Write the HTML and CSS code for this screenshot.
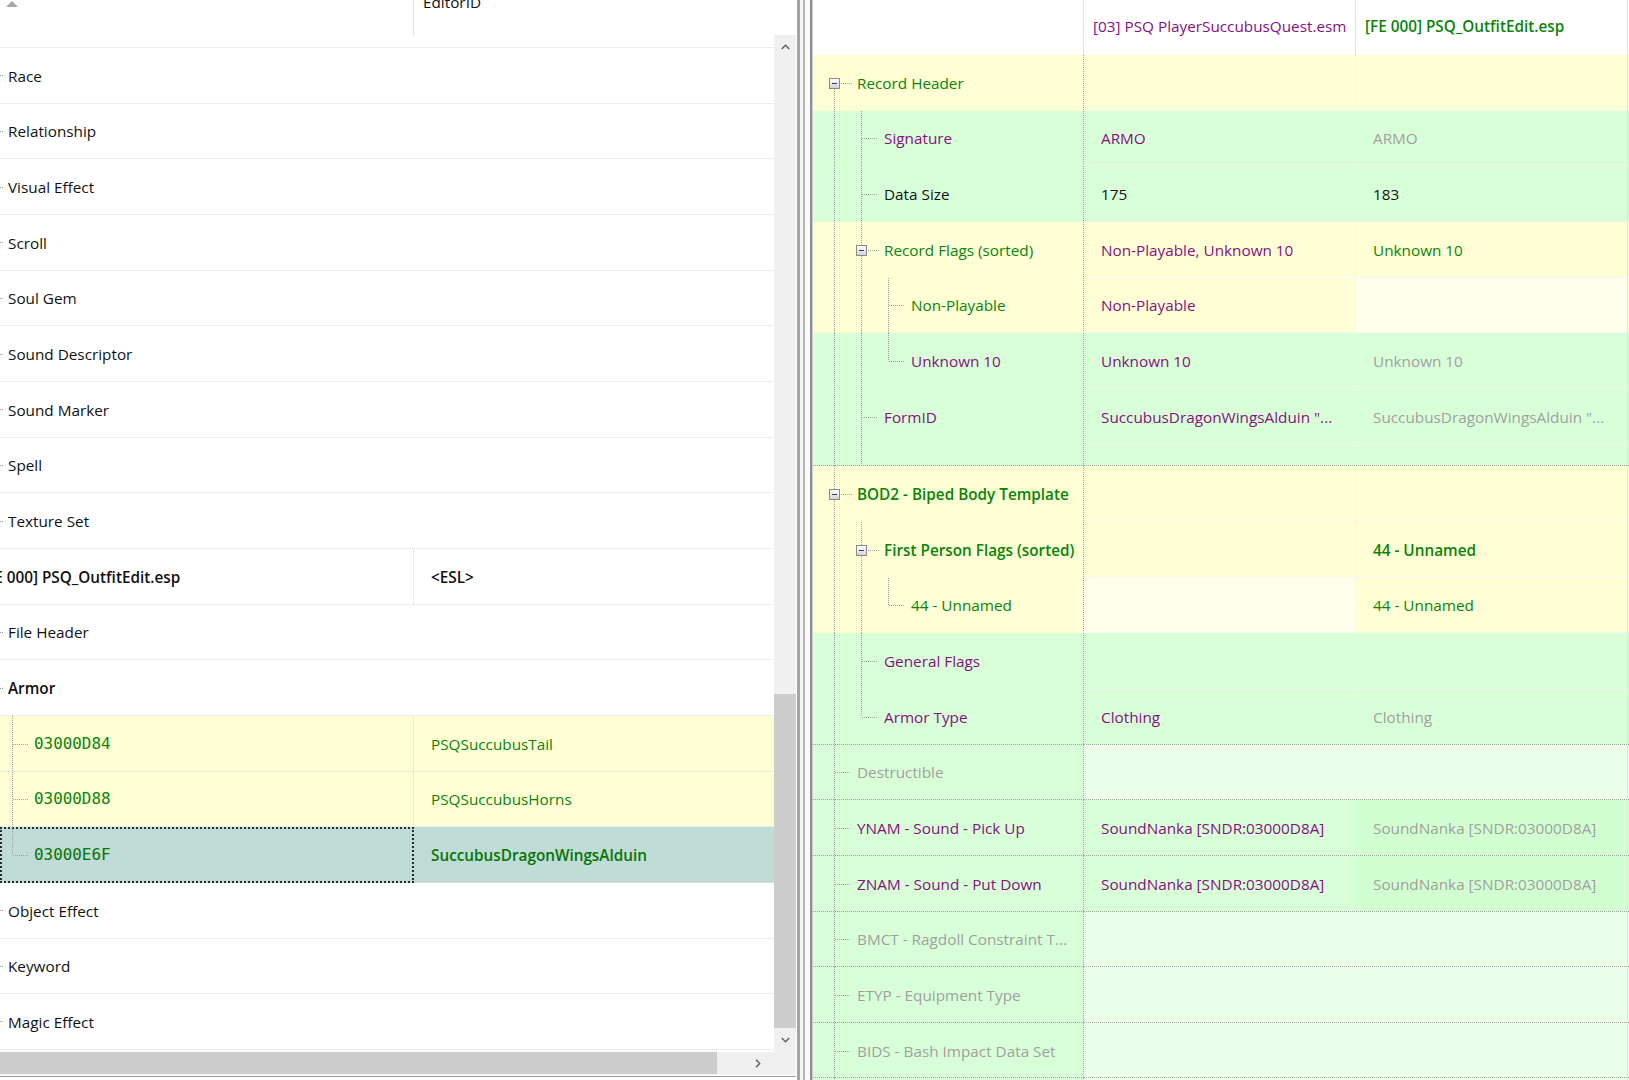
FILE: index.html
```html
<!DOCTYPE html>
<html lang="en">
<head>
<meta charset="utf-8">
<title>PSQ_OutfitEdit.esp - Armor</title>
<link rel="stylesheet" href="styles.css">
</head>
<body>
<div class="app">
  <section class="left">
    <div class="lhead">
      <div class="lh1"><svg class="sort" width="12" height="7" viewBox="0 0 12 7"><polygon points="0,7 6,1 12,7" fill="#a8a8a8"/></svg></div>
      <div class="lh2"><span>EditorID</span></div>
    </div>
    <div class="lmid">
      <div class="lbody">
        <div class="lr part"></div>
        <div class="lr"><div class="l1"><i class="dot"></i><span>Race</span></div><div class="l2"></div></div>
        <div class="lr"><div class="l1"><i class="dot"></i><span>Relationship</span></div><div class="l2"></div></div>
        <div class="lr"><div class="l1"><i class="dot"></i><span>Visual Effect</span></div><div class="l2"></div></div>
        <div class="lr"><div class="l1"><i class="dot"></i><span>Scroll</span></div><div class="l2"></div></div>
        <div class="lr"><div class="l1"><i class="dot"></i><span>Soul Gem</span></div><div class="l2"></div></div>
        <div class="lr"><div class="l1"><i class="dot"></i><span>Sound Descriptor</span></div><div class="l2"></div></div>
        <div class="lr"><div class="l1"><i class="dot"></i><span>Sound Marker</span></div><div class="l2"></div></div>
        <div class="lr"><div class="l1"><i class="dot"></i><span>Spell</span></div><div class="l2"></div></div>
        <div class="lr"><div class="l1"><i class="dot"></i><span>Texture Set</span></div><div class="l2"></div></div>
        <div class="lr split"><div class="l1"><span class="b neg">[FE 000] PSQ_OutfitEdit.esp</span></div><div class="l2"><span class="b">&lt;ESL&gt;</span></div></div>
        <div class="lr"><div class="l1"><i class="dot"></i><span>File Header</span></div><div class="l2"></div></div>
        <div class="lr"><div class="l1"><i class="dot"></i><span class="b">Armor</span></div><div class="l2"></div></div>
        <div class="lr split y"><div class="l1"><i class="kid"></i><span class="mono g">03000D84</span></div><div class="l2"><span class="g">PSQSuccubusTail</span></div></div>
        <div class="lr split y"><div class="l1"><i class="kid"></i><span class="mono g">03000D88</span></div><div class="l2"><span class="g">PSQSuccubusHorns</span></div></div>
        <div class="lr split sel"><div class="l1"><i class="kid last"></i><span class="mono dg">03000E6F</span></div><div class="l2"><span class="dg b">SuccubusDragonWingsAlduin</span></div></div>
        <div class="lr"><div class="l1"><i class="dot"></i><span>Object Effect</span></div><div class="l2"></div></div>
        <div class="lr"><div class="l1"><i class="dot"></i><span>Keyword</span></div><div class="l2"></div></div>
        <div class="lr"><div class="l1"><i class="dot"></i><span>Magic Effect</span></div><div class="l2"></div></div>
      </div>
      <div class="vscroll">
        <div class="sbtn"><svg width="9" height="6" viewBox="0 0 9 6"><polyline points="0.8,5 4.5,1.3 8.2,5" fill="none" stroke="#606060" stroke-width="1.4"/></svg></div>
        <div class="strack"></div>
        <div class="vthumb"></div>
        <div class="sbtn"><svg width="9" height="6" viewBox="0 0 9 6"><polyline points="0.8,1 4.5,4.7 8.2,1" fill="none" stroke="#606060" stroke-width="1.4"/></svg></div>
      </div>
    </div>
    <div class="hscroll">
      <div class="hthumb"></div>
      <div class="htrack"><svg width="6" height="9" viewBox="0 0 6 9"><polyline points="1,0.8 4.7,4.5 1,8.2" fill="none" stroke="#606060" stroke-width="1.4"/></svg></div>
      <div class="corner"></div>
    </div>
    <div class="lfoot"></div>
  </section>

  <div class="splitter"></div>

  <section class="right">
    <div class="rhead">
      <div class="rh"></div>
      <div class="rh"><span class="p">[03] PSQ PlayerSuccubusQuest.esm</span></div>
      <div class="rh"><span class="g b">[FE 000] PSQ_OutfitEdit.esp</span></div>
      <div class="rh tl"></div>
    </div>

    <div class="rr y">
      <div class="rc c1"><i class="gd boxf"><b class="bx"></b></i><span class="t g">Record Header</span></div>
      <div class="rc c2"></div><div class="rc c3"></div><div class="rc tl"></div>
    </div>
    <div class="rr gn">
      <div class="rc c1"><i class="gd"></i><i class="gd tee"></i><span class="t p">Signature</span></div>
      <div class="rc c2"><span class="p">ARMO</span></div><div class="rc c3"><span class="gr">ARMO</span></div><div class="rc tl"></div>
    </div>
    <div class="rr gn">
      <div class="rc c1"><i class="gd"></i><i class="gd tee"></i><span class="t">Data Size</span></div>
      <div class="rc c2"><span>175</span></div><div class="rc c3"><span>183</span></div><div class="rc tl"></div>
    </div>
    <div class="rr y">
      <div class="rc c1"><i class="gd"></i><i class="gd boxm"><b class="bx"></b></i><span class="t g">Record Flags (sorted)</span></div>
      <div class="rc c2"><span class="p">Non-Playable, Unknown 10</span></div><div class="rc c3"><span class="g">Unknown 10</span></div><div class="rc tl"></div>
    </div>
    <div class="rr y">
      <div class="rc c1"><i class="gd"></i><i class="gd"></i><i class="gd tee"></i><span class="t g">Non-Playable</span></div>
      <div class="rc c2"><span class="p">Non-Playable</span></div><div class="rc c3 ly"></div><div class="rc tl"></div>
    </div>
    <div class="rr gn">
      <div class="rc c1"><i class="gd"></i><i class="gd"></i><i class="gd elb"></i><span class="t p">Unknown 10</span></div>
      <div class="rc c2"><span class="p">Unknown 10</span></div><div class="rc c3"><span class="gr">Unknown 10</span></div><div class="rc tl"></div>
    </div>
    <div class="rr gn">
      <div class="rc c1"><i class="gd"></i><i class="gd tee"></i><span class="t p">FormID</span></div>
      <div class="rc c2"><span class="p">SuccubusDragonWingsAlduin "...</span></div><div class="rc c3"><span class="gr">SuccubusDragonWingsAlduin "...</span></div><div class="rc tl"></div>
    </div>
    <div class="rr gn dk short">
      <div class="rc c1"><i class="gd"></i><i class="gd"></i></div>
      <div class="rc c2"></div><div class="rc c3"></div><div class="rc tl"></div>
    </div>
    <div class="rr y">
      <div class="rc c1"><i class="gd boxm"><b class="bx"></b></i><span class="t g b">BOD2 - Biped Body Template</span></div>
      <div class="rc c2"></div><div class="rc c3"></div><div class="rc tl"></div>
    </div>
    <div class="rr y">
      <div class="rc c1"><i class="gd"></i><i class="gd boxm"><b class="bx"></b></i><span class="t g b">First Person Flags (sorted)</span></div>
      <div class="rc c2"></div><div class="rc c3"><span class="g b">44 - Unnamed</span></div><div class="rc tl"></div>
    </div>
    <div class="rr y">
      <div class="rc c1"><i class="gd"></i><i class="gd"></i><i class="gd elb"></i><span class="t g">44 - Unnamed</span></div>
      <div class="rc c2 ly"></div><div class="rc c3"><span class="g">44 - Unnamed</span></div><div class="rc tl"></div>
    </div>
    <div class="rr gn">
      <div class="rc c1"><i class="gd"></i><i class="gd tee"></i><span class="t p">General Flags</span></div>
      <div class="rc c2"></div><div class="rc c3"></div><div class="rc tl"></div>
    </div>
    <div class="rr gn dk">
      <div class="rc c1"><i class="gd"></i><i class="gd elb"></i><span class="t p">Armor Type</span></div>
      <div class="rc c2"><span class="p">Clothing</span></div><div class="rc c3"><span class="gr">Clothing</span></div><div class="rc tl"></div>
    </div>
    <div class="rr gn dk">
      <div class="rc c1"><i class="gd tee"></i><span class="t gr">Destructible</span></div>
      <div class="rc c2 lg"></div><div class="rc c3 lg"></div><div class="rc tl lg"></div>
    </div>
    <div class="rr gn dk">
      <div class="rc c1"><i class="gd tee"></i><span class="t p">YNAM - Sound - Pick Up</span></div>
      <div class="rc c2"><span class="p">SoundNanka [SNDR:03000D8A]</span></div><div class="rc c3 gg"><span class="gr">SoundNanka [SNDR:03000D8A]</span></div><div class="rc tl"></div>
    </div>
    <div class="rr gn dk">
      <div class="rc c1"><i class="gd tee"></i><span class="t p">ZNAM - Sound - Put Down</span></div>
      <div class="rc c2"><span class="p">SoundNanka [SNDR:03000D8A]</span></div><div class="rc c3 gg"><span class="gr">SoundNanka [SNDR:03000D8A]</span></div><div class="rc tl"></div>
    </div>
    <div class="rr gn dk">
      <div class="rc c1"><i class="gd tee"></i><span class="t gr">BMCT - Ragdoll Constraint T...</span></div>
      <div class="rc c2 lg"></div><div class="rc c3 lg"></div><div class="rc tl lg"></div>
    </div>
    <div class="rr gn dk">
      <div class="rc c1"><i class="gd tee"></i><span class="t gr">ETYP - Equipment Type</span></div>
      <div class="rc c2 lg"></div><div class="rc c3 lg"></div><div class="rc tl lg"></div>
    </div>
    <div class="rr gn dk">
      <div class="rc c1"><i class="gd tee"></i><span class="t gr">BIDS - Bash Impact Data Set</span></div>
      <div class="rc c2 lg"></div><div class="rc c3 lg"></div><div class="rc tl lg"></div>
    </div>
    <div class="rr gn dk">
      <div class="rc c1"><i class="gd tee"></i></div>
      <div class="rc c2 lg"></div><div class="rc c3 lg"></div><div class="rc tl lg"></div>
    </div>
  </section>
</div>
</body>
</html>
```

FILE: styles.css
```css
* { box-sizing: border-box; }

html, body {
  margin: 0;
  height: 100%;
}

body {
  font-family: "Open Sans", "Noto Sans", "DejaVu Sans", sans-serif;
  font-size: 15.3px;
  line-height: 20px;
  color: #111;
  background: #fff;
  overflow: hidden;
}

i, b { font-style: normal; }

/* text colours */
.g  { color: #0a840a; }
.dg { color: #067406; }
.p  { color: #85107f; }
.gr { color: #a0a0a0; }
.b  { font-weight: 600; }
.mono { font-family: "DejaVu Sans Mono", "Liberation Mono", monospace; font-size: 15.9px; }

.app {
  display: flex;
  width: 1629px;
  height: 1080px;
}

/* ---------- left navigation tree ---------- */
.left {
  flex: none;
  width: 796px;
  height: 1080px;
  display: flex;
  flex-direction: column;
}

.lhead {
  flex: none;
  height: 35px;
  display: grid;
  grid-template-columns: 413px 1fr;
  overflow: hidden;
}

.lh1 { padding-left: 6px; }
.sort { display: block; }

.lh2 {
  border-left: 1px solid #e3e3e3;
  padding-left: 9px;
}
.lh2 span { display: block; margin-top: -8px; }

.lmid {
  flex: none;
  height: 1017px;
  display: flex;
}

.lbody {
  flex: 1;
  overflow: hidden;
}

.lr {
  --bg: #fff;
  height: 55.67px;
  display: grid;
  grid-template-columns: 414px 1fr;
  background:
    repeating-linear-gradient(90deg, #dcdcdc 0 1px, transparent 1px 2px) left bottom / 100% 1px no-repeat,
    var(--bg);
}
.lr.part { height: 13px; }
.lr.y { --bg: #ffffd6; }
.lr.sel { --bg: #bfdcd7; }

.l1 {
  display: flex;
  align-items: center;
  white-space: nowrap;
  overflow: hidden;
}
.l2 {
  display: flex;
  align-items: center;
  padding-left: 17px;
  white-space: nowrap;
  overflow: hidden;
}
.split .l1 {
  background: repeating-linear-gradient(180deg, #d6d6d6 0 1px, transparent 1px 2px) right top / 1px 100% no-repeat;
}
.lr.sel .l1 {
  outline: 2px dotted #2e2e2e;
  outline-offset: -2px;
}

.dot {
  flex: none;
  width: 8px;
  align-self: stretch;
  background: repeating-linear-gradient(90deg, #9a9a9a 0 1px, transparent 1px 2px) left center / 3px 1px no-repeat;
}
.neg { margin-left: -19px; }

.kid {
  flex: none;
  width: 28px;
  align-self: stretch;
  position: relative;
  margin-right: 6px;
}
.kid::before {
  content: "";
  position: absolute;
  left: 12px;
  top: 0;
  bottom: 0;
  width: 1px;
  background: repeating-linear-gradient(180deg, #a0a0a0 0 1px, transparent 1px 2px);
}
.kid.last::before { bottom: 50%; }
.kid::after {
  content: "";
  position: absolute;
  left: 13px;
  top: 50%;
  width: 15px;
  height: 1px;
  background: repeating-linear-gradient(90deg, #a0a0a0 0 1px, transparent 1px 2px);
}

/* scrollbars */
.vscroll {
  flex: none;
  width: 22px;
  background: #f0f0f0;
  display: flex;
  flex-direction: column;
}
.sbtn {
  flex: none;
  height: 24px;
  display: flex;
  align-items: center;
  justify-content: center;
}
.sbtn svg { display: block; }
.strack { flex: none; height: 635px; }
.vthumb { flex: none; height: 334px; background: #cdcdcd; }

.hscroll {
  flex: none;
  height: 22px;
  display: flex;
}
.hthumb { flex: none; width: 717px; background: #cdcdcd; }
.htrack {
  flex: none;
  width: 57px;
  background: #f0f0f0;
  display: flex;
  align-items: center;
  justify-content: flex-end;
  padding-right: 13px;
}
.htrack svg { display: block; }
.corner { flex: 1; background: #f0f0f0; }

.lfoot {
  flex: none;
  height: 6px;
  border-top: 1px solid #f0f0f0;
  background: linear-gradient(#9a9a9a, #9a9a9a) left 1px / 100% 1px no-repeat, #fff;
}

/* ---------- splitter ---------- */
.splitter {
  flex: none;
  width: 17px;
  background: linear-gradient(90deg,
    #fff 0 1px,
    #a4a4a4 1px 4px,
    #f4f4f4 4px 7px,
    #b4b4b4 7px 9px,
    #fafafa 9px 14px,
    #8e8e8e 14px 16px,
    #d0d0d0 16px 17px);
}

/* ---------- right record view ---------- */
.right {
  flex: 1;
  min-width: 0;
  overflow: hidden;
  background: #d9ffd9;
}

.rhead, .rr {
  display: grid;
  grid-template-columns: 271px 272px 272px 1px;
}

.rhead {
  height: 55px;
  background: #fff;
}
.rh {
  display: flex;
  align-items: center;
  padding-left: 9px;
  padding-bottom: 3px;
  white-space: nowrap;
  overflow: hidden;
  border-right: 1px solid #e3e3e3;
}
.rh.tl { border-right: 0; padding: 0; }

.rr { height: 55.67px; }
.rr.short { height: 21.67px; }

.rc {
  --bg: #fff;
  --sep: #f2f2f2;
  --vsep: transparent;
  display: flex;
  align-items: center;
  white-space: nowrap;
  overflow: hidden;
  background:
    repeating-linear-gradient(90deg, var(--sep) 0 1px, transparent 1px 2px) left bottom / 100% 1px no-repeat,
    repeating-linear-gradient(180deg, var(--vsep) 0 1px, transparent 1px 2px) right top / 1px 100% no-repeat,
    var(--bg);
}
.rr.y .rc  { --bg: #ffffd6; }
.rr.gn .rc { --bg: #d9ffd9; }
.rr .rc.ly { --bg: #ffffeb; }
.rr .rc.lg { --bg: #ebffeb; }
.rr .rc.gg { --bg: #d1ffd1; }
.rr.dk .rc { --sep: #a3a3a3; }

.c1 {
  --vsep: #a3a3a3;
  align-items: stretch;
  padding-left: 7px;
}
.c2 { --vsep: #f2f2f2; padding-left: 17px; }
.c3 { padding-left: 17px; box-shadow: inset -1px 0 #e3e3e3; }

.t {
  align-self: center;
  margin-left: 10px;
}

/* tree guides */
.gd {
  flex: none;
  width: 27px;
  position: relative;
}
.gd::before {
  content: "";
  position: absolute;
  left: 14px;
  top: 0;
  bottom: 0;
  width: 1px;
  background: repeating-linear-gradient(180deg, #a0a0a0 0 1px, transparent 1px 2px);
}
.gd.elb::before { bottom: 50%; }
.gd.boxf::before { top: 50%; }

.gd.tee::after,
.gd.elb::after {
  content: "";
  position: absolute;
  left: 15px;
  top: 50%;
  width: 15px;
  height: 1px;
  background: repeating-linear-gradient(90deg, #a0a0a0 0 1px, transparent 1px 2px);
}
.gd.boxf::after,
.gd.boxm::after {
  content: "";
  position: absolute;
  left: 21px;
  top: 50%;
  width: 11px;
  height: 1px;
  background: repeating-linear-gradient(90deg, #a0a0a0 0 1px, transparent 1px 2px);
}

.bx {
  position: absolute;
  left: 9px;
  top: 50%;
  margin-top: -5px;
  width: 11px;
  height: 11px;
  border: 1px solid #8a8a8a;
  background: linear-gradient(#ffffff, #d2d2d2);
  z-index: 1;
}
.bx::after {
  content: "";
  position: absolute;
  left: 2px;
  top: 4px;
  width: 5px;
  height: 1px;
  background: #2e3d66;
}
```
